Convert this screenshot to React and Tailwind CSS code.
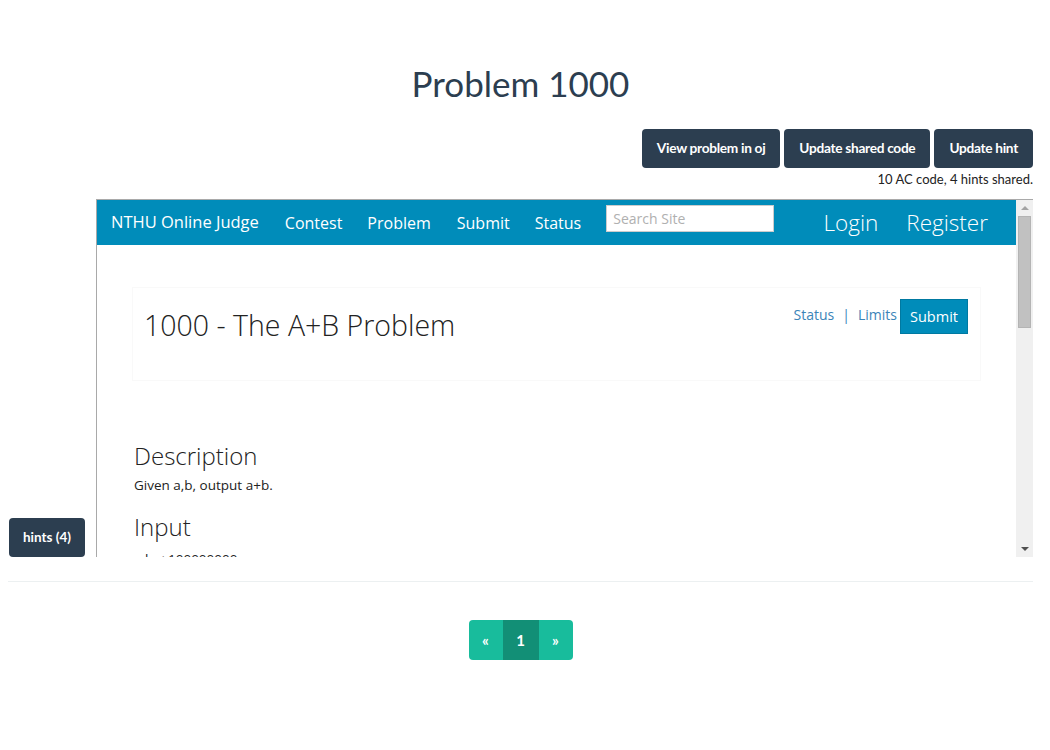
import React from 'react';

const lato = { fontFamily: 'Lato, "Liberation Sans", sans-serif' };

function TopButton({ children }) {
    return (
        <button className="h-[39px] px-[15px] rounded-[4px] bg-[#2c3e50] text-white text-[13.7px] font-bold tracking-[-0.3px]">
            {children}
        </button>
    );
}

function FakeScrollbar() {
    return (
        <div className="w-[17px] bg-[#f0f0f0] flex flex-col items-center shrink-0">
            <div className="h-[16px] flex items-center justify-center">
                <div className="w-0 h-0 border-l-[4px] border-r-[4px] border-b-[4px] border-l-transparent border-r-transparent border-b-[#a3a3a3]" />
            </div>
            <div className="w-[13px] h-[112px] bg-[#c1c1c1] border border-[#b4b4b4]" />
            <div className="flex-1" />
            <div className="h-[17px] flex items-center justify-center">
                <div className="w-0 h-0 border-l-[4px] border-r-[4px] border-t-[4px] border-l-transparent border-r-transparent border-t-[#505050]" />
            </div>
        </div>
    );
}

function JudgeFrame() {
    return (
        <div className="flex-1 h-[358px] border-t border-l border-[#a9a9a9] flex overflow-hidden" style={{ fontFamily: '"Open Sans", "Liberation Sans", sans-serif' }}>
            <div className="flex-1 overflow-hidden bg-white">
                <div className="h-[45px] bg-[#008cba] flex items-center pl-[14px] pr-[28px] text-white">
                    <span className="text-[16.5px]">NTHU Online Judge</span>
                    <span className="text-[16px] ml-[26px]">Contest</span>
                    <span className="text-[16px] ml-[25px]">Problem</span>
                    <span className="text-[16px] ml-[26px]">Submit</span>
                    <span className="text-[16px] ml-[25px]">Status</span>
                    <div className="ml-[25px] self-start mt-[5px] w-[168px] h-[27px] bg-white border border-[#cccccc] flex items-start pt-[2px] px-[6px] text-[14px] text-[#b0b0b0]">
                        Search Site
                    </div>
                    <div className="flex-1" />
                    <span className="text-[22.5px] font-light">Login</span>
                    <span className="text-[22.5px] font-light ml-[28px]">Register</span>
                </div>
                <div className="pl-[35px] pr-[35px] pt-[42px]">
                    <div className="border border-[#f9f9f9] h-[94px] flex items-start pl-[11px] pr-[12px] pt-[11px]">
                        <h2 className="mt-[8px] text-[28.5px] font-light text-[#222222] leading-[36px]">1000 - The A+B Problem</h2>
                        <div className="flex-1" />
                        <div className="flex items-start">
                            <span className="text-[14px] text-[#3b84b8] mt-[5px]">Status</span>
                            <span className="text-[14px] text-[#3b84b8] mt-[5px] mx-[8px]">|</span>
                            <span className="text-[14px] text-[#3b84b8] mt-[5px] mr-[3px]">Limits</span>
                            <button className="h-[35px] w-[68px] bg-[#008cba] border border-[#0079a1] text-white text-[14.5px]">Submit</button>
                        </div>
                    </div>
                    <h3 className="mt-[60px] text-[24px] font-light text-[#222222] leading-[30px] pl-[2px]">Description</h3>
                    <p className="text-[13.5px] text-[#222222] leading-[20px] mt-[4px] pl-[2px]">Given a,b, output a+b.</p>
                    <h3 className="mt-[17px] text-[24px] font-light text-[#222222] leading-[30px] pl-[2px]">Input</h3>
                    <p className="text-[13.5px] text-[#222222] leading-[20px] mt-[7px] pl-[2px]">a,b &lt; 100000000</p>
                </div>
            </div>
            <FakeScrollbar />
        </div>
    );
}

export default function App() {
    return (
        <div className="bg-white min-h-[750px] pl-[8px] pr-[17px] text-[#2c3e50]" style={lato}>
            <h1 className="pt-[63px] text-center text-[35px] leading-[40px] font-normal text-[#2c3e50]">Problem 1000</h1>

            <div className="mt-[26px] flex justify-end gap-[4px]">
                <TopButton>View problem in oj</TopButton>
                <TopButton>Update shared code</TopButton>
                <TopButton>Update hint</TopButton>
            </div>
            <p className="text-right text-[13px] leading-[20px] mt-[1px] text-[#222222]">10 AC code, 4 hints shared.</p>

            <div className="mt-[10px] flex">
                <div className="w-[88px] shrink-0 flex items-end">
                    <button className="ml-[1px] h-[39px] w-[76px] rounded-[4px] bg-[#2c3e50] text-white text-[13.5px] font-bold">hints (4)</button>
                </div>
                <JudgeFrame />
            </div>

            <hr className="mt-[24px] border-t border-[#ecf0f1]" />

            <div className="mt-[38px] flex justify-center">
                <div className="flex h-[40px] text-white text-[15px] font-bold">
                    <span className="w-[34px] flex items-center justify-center bg-[#18bc9c] rounded-l-[4px]">«</span>
                    <span className="w-[36px] flex items-center justify-center bg-[#128f76]">1</span>
                    <span className="w-[34px] flex items-center justify-center bg-[#18bc9c] rounded-r-[4px]">»</span>
                </div>
            </div>
        </div>
    );
}
